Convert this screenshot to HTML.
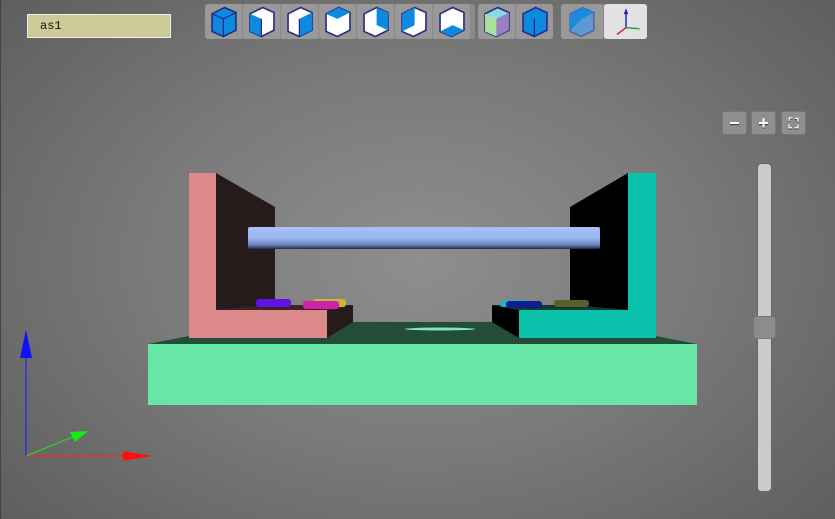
<!DOCTYPE html>
<html><head><style>
html,body{margin:0;padding:0;width:835px;height:519px;overflow:hidden}
body{background:radial-gradient(ellipse 600px 420px at 420px 260px,#8e8e8e 0%,#7a7a7a 45%,#5a5a5a 100%);position:relative;font-family:"Liberation Sans",sans-serif}
.lbl{position:absolute;left:27px;top:14px;width:144px;height:24px;background:#cccb98;border:1px solid #eee;box-sizing:border-box;font:12px "Liberation Mono",monospace;line-height:22px;padding-left:12px;color:#111}
.grp{position:absolute;top:4px;height:35px;background:#8a8a8a;border-radius:3px;display:flex;gap:1px}
.b{width:37px;height:35px;background:#999;border-radius:3px;display:flex;align-items:center;justify-content:center}
.b svg{width:34px;height:34px}
.zb{position:absolute;top:111px;width:25px;height:24px;background:#8f8f8f;border-radius:3px;border:1px solid #777;box-sizing:border-box;color:#fff;font-weight:bold;text-align:center;line-height:22px;font-size:18px;text-shadow:0 1px 1px #333}
</style></head><body>
<svg width="835" height="519" style="position:absolute;left:0;top:0">
<defs>
<linearGradient id="rod" x1="0" y1="0" x2="0" y2="1"><stop offset="0" stop-color="#a6c2f8"/><stop offset=".5" stop-color="#9ab5ef"/><stop offset=".8" stop-color="#6e86c0"/><stop offset="1" stop-color="#1e2a48"/></linearGradient>
</defs>
<rect x="0" y="0" width="1" height="519" fill="#444"/>
<polygon points="148,344 189,336 353,322 492,322 656,336 697,344" fill="#234d38"/>
<ellipse cx="440" cy="329" rx="35" ry="1.5" fill="#7fe8b8"/>
<rect x="148" y="344" width="549" height="61" fill="#68e6a5"/>
<polygon points="216,173 275,207 275,305 216,310" fill="#261a1a"/>
<polygon points="327,310 353,305 353,322 327,338" fill="#261a1a"/>
<polygon points="216,310 275,305 353,305 327,310" fill="#3a2424"/>
<rect x="189" y="173" width="27" height="165" fill="#dc898b"/>
<rect x="189" y="310" width="138" height="28" fill="#dc898b"/>
<polygon points="628,173 570,207 570,305 628,310" fill="#000"/>
<polygon points="519,310 492,305 492,322 519,338" fill="#000"/>
<polygon points="519,310 492,305 570,305 628,310" fill="#0a3a30"/>
<rect x="628" y="173" width="28" height="165" fill="#0ac2ab"/>
<rect x="519" y="310" width="137" height="28" fill="#0ac2ab"/>
<rect x="256" y="299" width="35" height="8" rx="3" fill="#6010e8"/>
<rect x="313" y="299" width="33" height="8" rx="3" fill="#c8b838"/>
<rect x="303" y="301" width="36" height="8" rx="3" fill="#d022a8"/>
<rect x="500" y="300" width="30" height="7" rx="3" fill="#2ab0c0"/>
<rect x="506" y="301" width="36" height="7" rx="3" fill="#10208a"/>
<rect x="554" y="300" width="35" height="7" rx="3" fill="#55622a"/>
<rect x="248" y="227" width="352" height="22" rx="2" fill="url(#rod)"/>
<line x1="26" y1="456" x2="26" y2="345" stroke="#2020ff" stroke-width="1.2"/>
<polygon points="26,330 20,358 32,358" fill="#1010ff"/>
<line x1="26" y1="456" x2="130" y2="456" stroke="#ff2020" stroke-width="1.2"/>
<polygon points="152,456 123,451 123,461" fill="#ff1010"/>
<line x1="26" y1="456" x2="75" y2="436" stroke="#20e020" stroke-width="1.2"/>
<polygon points="88,431 70,432 75,442" fill="#10ee10"/>
<rect x="757.5" y="163.5" width="14" height="328" rx="4" fill="#cbcbcb" stroke="#666"/>
<rect x="753.5" y="316.5" width="22" height="22" rx="3" fill="#8c8c8c" stroke="#777"/>
</svg>
<div class="lbl">as1</div>
<div class="grp" style="left:205px;width:270px">
<div class="b"><svg viewBox="3 2 25 27"><polygon points="6,9 16,4 25,8 25,22 15,27 6,23" fill="#0b8ae0" stroke="#2a2a80" stroke-width="1.3"/><polyline points="6,9 15,13 25,8" fill="none" stroke="#2a2a80"/><line x1="15" y1="13" x2="15" y2="27" stroke="#2a2a80"/></svg></div>
<div class="b"><svg viewBox="3 2 25 27"><polygon points="6,9 16,4 25,8 25,22 15,27 6,23" fill="#fff" stroke="#2a2a80" stroke-width="1.3"/><polygon points="6,9 15,13 15,27 6,23" fill="#0b8ae0"/><line x1="15" y1="13" x2="15" y2="27" stroke="#2a2a80"/></svg></div>
<div class="b"><svg viewBox="3 2 25 27"><polygon points="6,9 16,4 25,8 25,22 15,27 6,23" fill="#fff" stroke="#2a2a80" stroke-width="1.3"/><polygon points="15,13 25,8 25,22 15,27" fill="#0b8ae0"/><line x1="15" y1="13" x2="15" y2="27" stroke="#2a2a80"/></svg></div>
<div class="b"><svg viewBox="3 2 25 27"><polygon points="6,9 16,4 25,8 25,22 15,27 6,23" fill="#fff" stroke="#2a2a80" stroke-width="1.3"/><polygon points="6,9 16,4 25,8 15,13" fill="#0b8ae0"/></svg></div>
<div class="b"><svg viewBox="3 2 25 27"><polygon points="6,9 16,4 25,8 25,22 15,27 6,23" fill="#fff" stroke="#2a2a80" stroke-width="1.3"/><polygon points="16,4 25,8 25,22 16,18" fill="#0b8ae0"/></svg></div>
<div class="b"><svg viewBox="3 2 25 27"><polygon points="6,9 16,4 25,8 25,22 15,27 6,23" fill="#fff" stroke="#2a2a80" stroke-width="1.3"/><polygon points="6,9 16,4 16,18 6,23" fill="#0b8ae0"/></svg></div>
<div class="b"><svg viewBox="3 2 25 27"><polygon points="6,9 16,4 25,8 25,22 15,27 6,23" fill="#fff" stroke="#2a2a80" stroke-width="1.3"/><polygon points="6,23 16,18 25,22 15,27" fill="#0b8ae0"/></svg></div>
</div>
<div class="grp" style="left:478px;width:75px">
<div class="b"><svg viewBox="3 2 25 27"><polygon points="6,9 16,4 25,8 25,22 15,27 6,23" fill="#8ad8e8" stroke="#2a2a80" stroke-width="1.3"/><polygon points="6,9 15,13 15,27 6,23" fill="#a8e0a0"/><polygon points="15,13 25,8 25,22 15,27" fill="#9a80c0"/></svg></div>
<div class="b"><svg viewBox="3 2 25 27"><polygon points="6,9 16,4 25,8 25,22 15,27 6,23" fill="#0b8ae0" stroke="#2a2a80" stroke-width="1.3"/><line x1="15" y1="13" x2="15" y2="27" stroke="#2a2a80"/></svg></div>
</div>
<div class="grp" style="left:561px;width:86px">
<div class="b" style="width:42px"><svg viewBox="3 2 25 27"><polygon points="6,9 16,4 25,8 25,22 15,27 6,23" fill="#5a9ad0" stroke="#555a90"/><polygon points="6,9 16,4 25,8 15,13 6,23" fill="#1a8ae0"/></svg></div>
<div class="b" style="width:43px;background:#e2e2e2"><svg viewBox="0 0 30 30"><line x1="15" y1="20" x2="15" y2="5" stroke="#22c" stroke-width="1.3"/><polygon points="15,3 13,8 17,8" fill="#22c"/><line x1="15" y1="20" x2="27" y2="21" stroke="#2a2" stroke-width="1.3"/><line x1="15" y1="20" x2="7" y2="26" stroke="#c22" stroke-width="1.3"/></svg></div>
</div>
<div class="zb" style="left:722px">−</div>
<div class="zb" style="left:751px">+</div>
<div class="zb" style="left:781px;font-size:14px">⛶</div>
</body></html>
